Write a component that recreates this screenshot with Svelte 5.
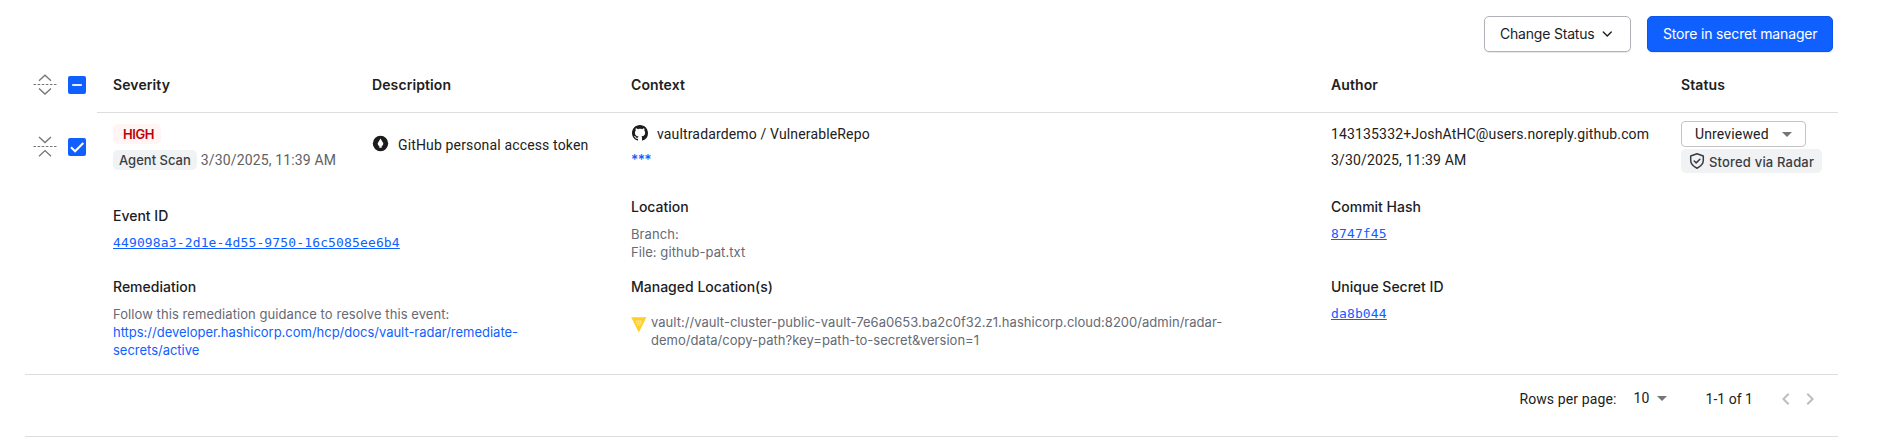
<script>
  const headers = ['Severity', 'Description', 'Context', 'Author', 'Status'];
</script>

{#snippet toggle(open)}
  <svg class="toggle" width="24" height="24" viewBox="0 0 24 24" fill="none" stroke="#757575" stroke-width="1.3">
    {#if open}
      <path d="M6 3l6 5.6L18 3M6 22.2l6-5.6 6 5.6" />
    {:else}
      <path d="M6 8.8l6-5.6 6 5.6M6 16.4l6 5.6 6-5.6" />
    {/if}
    <path d="M.5 12.5h23" stroke-width="1.2" stroke-dasharray="2.6 1.5" />
  </svg>
{/snippet}

<main>
  <div class="actions">
    <button class="btn outline">
      <span>Change Status</span>
      <svg width="16" height="16" viewBox="0 0 16 16" fill="none" stroke="#1c1c1f" stroke-width="1.5" stroke-linecap="round" stroke-linejoin="round"><path d="M3.6 5.8L8 10.3l4.4-4.5" /></svg>
    </button>
    <button class="btn primary"><span>Store in secret manager</span></button>
  </div>

  <section class="head">
    <div class="select">
      {@render toggle(false)}
      <span class="check"><svg width="18" height="18" viewBox="0 0 18 18"><path d="M4.2 9h9.6" stroke="#fff" stroke-width="1.8" /></svg></span>
    </div>
    <div class="cols headcols">
      {#each headers as h}<div>{h}</div>{/each}
    </div>
  </section>

  <section class="row">
    <div class="select">
      {@render toggle(true)}
      <span class="check"><svg width="18" height="18" viewBox="0 0 18 18" fill="none"><path d="M3 9.2l4.1 4.1L15.3 5" stroke="#fff" stroke-width="2" /></svg></span>
    </div>
    <div class="cols">
      <div class="severity">
        <div><span class="badge high">HIGH</span></div>
        <div class="scan"><span class="badge">Agent Scan</span><span class="when">3/30/2025, 11:39 AM</span></div>
      </div>
      <div class="desc">
        <svg width="17" height="17" viewBox="0 0 17 17"><circle cx="8.5" cy="8.5" r="7.7" fill="#1c1c1f" /><path d="M8.5 3.5l2.8 4.7c0 1.5-.7 2.4-1.6 2.9v1.7H7.3v-1.7c-.9-.5-1.6-1.4-1.6-2.9z" fill="#fff" /></svg>
        <span>GitHub personal access token</span>
      </div>
      <div class="context">
        <div class="repo">
          <svg width="16" height="16" viewBox="0 0 16 16"><path fill="#1c1c1f" d="M8 0C3.58 0 0 3.58 0 8c0 3.54 2.29 6.53 5.47 7.59.4.07.55-.17.55-.38 0-.19-.01-.82-.01-1.49-2.01.37-2.53-.49-2.69-.94-.09-.23-.48-.94-.82-1.13-.28-.15-.68-.52-.01-.53.63-.01 1.08.58 1.23.82.72 1.21 1.87.87 2.33.66.07-.52.28-.87.51-1.07-1.78-.2-3.64-.89-3.64-3.95 0-.87.31-1.59.82-2.15-.08-.2-.36-1.02.08-2.12 0 0 .67-.21 2.2.82.64-.18 1.32-.27 2-.27s1.36.09 2 .27c1.53-1.04 2.2-.82 2.2-.82.44 1.1.16 1.92.08 2.12.51.56.82 1.27.82 2.15 0 3.07-1.87 3.75-3.65 3.95.29.25.54.73.54 1.48 0 1.07-.01 1.93-.01 2.2 0 .21.15.46.55.38A8.01 8.01 0 0 0 16 8c0-4.42-3.58-8-8-8z" /></svg>
          <span>vaultradardemo / VulnerableRepo</span>
        </div>
        <a class="stars" href="#secret">***</a>
      </div>
      <div class="author">
        <div>143135332+JoshAtHC@users.noreply.github.com</div>
        <div>3/30/2025, 11:39 AM</div>
      </div>
      <div class="status">
        <div class="picker"><span>Unreviewed</span><i class="caret"></i></div>
        <div class="stored">
          <svg width="16" height="16" viewBox="0 0 16 16" fill="none" stroke="#3b3d45" stroke-width="1.5" stroke-linecap="round" stroke-linejoin="round"><path d="M8 .8L1.7 3v4.6c0 3.7 3.4 6.2 6.3 7.6 2.9-1.4 6.3-3.9 6.3-7.6V3z" /><path d="M5.2 8l2 1.9 3.7-3.7" /></svg>
          <span>Stored via Radar</span>
        </div>
      </div>
    </div>
  </section>

  <section class="details">
    <div class="col">
      <div class="event">
        <h4>Event ID</h4>
        <a class="mono" href="#event">449098a3-2d1e-4d55-9750-16c5085ee6b4</a>
      </div>
      <div>
        <h4>Remediation</h4>
        <p>Follow this remediation guidance to resolve this event:</p>
        <p><a class="guide" href="#guide">https://developer.hashicorp.com/hcp/docs/vault-radar/remediate-<br />secrets/active</a></p>
      </div>
    </div>
    <div class="col">
      <div class="block">
        <h4>Location</h4>
        <p>Branch:</p>
        <p>File: github-pat.txt</p>
      </div>
      <div>
        <h4>Managed Location(s)</h4>
        <div class="managed">
          <svg width="16" height="16" viewBox="0 0 16 16"><path d="M.2.3h15.2L7.8 15.6z" fill="#ffcf25" /><path d="M5 4.1h5.6M5 6.1h5.6M6.2 8.1h3.2" stroke="#fff" stroke-width=".9" stroke-dasharray="1.5 .5" opacity=".85" /></svg>
          <p>vault://vault-cluster-public-vault-7e6a0653.ba2c0f32.z1.hashicorp.cloud:8200/admin/radar-<br />demo/data/copy-path?key=path-to-secret&amp;version=1</p>
        </div>
      </div>
    </div>
    <div class="col">
      <div class="block">
        <h4>Commit Hash</h4>
        <a class="mono" href="#commit">8747f45</a>
      </div>
      <div>
        <h4>Unique Secret ID</h4>
        <a class="mono" href="#unique">da8b044</a>
      </div>
    </div>
  </section>

  <footer>
    <span class="per">Rows per page:</span>
    <span class="num">10</span>
    <i class="caret"></i>
    <span class="range">1-1 of 1</span>
    <svg class="prev" width="24" height="24" viewBox="0 0 24 24" fill="#bdbdbd"><path d="M15.41 7.41L14 6l-6 6 6 6 1.41-1.41L10.83 12z" /></svg>
    <svg width="24" height="24" viewBox="0 0 24 24" fill="#bdbdbd"><path d="M10 6L8.59 7.41 13.17 12l-4.58 4.59L10 18l6-6z" /></svg>
  </footer>
</main>

<style>
  :global(body) { background: #fff; }
  main {
    box-sizing: border-box;
    width: 1838px;
    height: 447px;
    padding: 16px 0 0 25px;
    font: 400 14px/20px Roboto, sans-serif;
    letter-spacing: 0.15px;
    color: #212121;
  }
  a { color: #1060ff; text-decoration: none; }
  .actions { display: flex; justify-content: flex-end; gap: 16px; padding-right: 5px; height: 36px; }
  .btn {
    box-sizing: border-box; height: 36px; border-radius: 5px; padding: 0 15px;
    display: flex; align-items: center; font: 400 14px/20px Inter, sans-serif;
    white-space: nowrap; box-shadow: 0 1px 1px rgba(101, 106, 118, .15);
  }
  .outline { width: 147px; background: #fff; color: #1c1c1f; border: 1px solid #b0b2b7; letter-spacing: -.2px; gap: 6px; }
  .primary { width: 186px; background: #1060ff; color: #fff; border: 1px solid #0c56e9; letter-spacing: -.16px; }
  .head, .row { display: grid; grid-template-columns: 72px 1741px; }
  .head { margin-top: 6px; height: 55px; }
  .row { height: 75px; }
  .select { display: flex; }
  .toggle { margin-left: 8px; }
  .check { width: 18px; height: 18px; margin-left: 11px; border-radius: 2px; background: #1060ff; display: block; }
  .check svg { display: block; }
  .head .toggle { margin-top: 14px; }
  .head .check { margin-top: 18px; }
  .row .toggle { margin-top: 21px; }
  .row .check { margin-top: 25px; }
  .cols { display: grid; grid-template-columns: 259px 259px 700px 350px 173px; }
  .cols > div { padding-left: 16px; white-space: nowrap; }
  .headcols { border-bottom: 1px solid #dedede; align-items: center; font: 600 14px/20px Inter, sans-serif; letter-spacing: .1px; }
  .severity { padding-top: 11px; }
  .severity > div { height: 20px; display: flex; align-items: center; }
  .severity .scan { margin-top: 6px; }
  .badge {
    height: 20px; box-sizing: border-box; padding: 0 6px; border-radius: 5px; background: #f1f2f3; color: #3b3d45;
    font: 500 13px/21px Inter, sans-serif; letter-spacing: 0;
  }
  .high { background: #fff5f5; color: #c00005; width: 48px; padding-left: 10px; font-weight: 600; letter-spacing: -.4px; }
  .when { margin-left: 4px; color: #616161; }
  .desc { display: flex; padding-top: 21px; }
  .desc svg { margin-top: 1px; }
  .desc span { margin-left: 9px; padding-top: 1px; }
  .context { padding-top: 11px; }
  .repo { display: flex; height: 20px; }
  .repo svg { margin: 1px 0 0 1px; }
  .repo span { margin-left: 9px; }
  .stars { display: block; margin-top: 6px; font: 500 14px/20px Inter, sans-serif; letter-spacing: -.6px; }
  .author { padding-top: 11px; }
  .author div + div { margin-top: 6px; }
  .status { padding-top: 8px; }
  .picker {
    box-sizing: border-box; width: 125px; height: 26px; border: 1px solid #c4c4c4; border-radius: 4px;
    padding: 0 13px; display: flex; justify-content: space-between; align-items: center;
  }
  .caret { width: 0; height: 0; border: 5px solid transparent; border-top-color: #757575; border-bottom: 0; }
  .stored {
    box-sizing: border-box; width: 141px; height: 24px; margin-top: 2px; padding-left: 8px; border-radius: 5px; background: #f1f2f3;
    color: #3b3d45; display: flex; align-items: center; gap: 4px; font: 500 13px/24px Inter, sans-serif; letter-spacing: .18px;
  }
  .stored span { padding-top: 1px; }
  .details { display: grid; grid-template-columns: 518px 700px 437px; padding-left: 88px; box-sizing: border-box; height: 187px; border-bottom: 1px solid #dedede; }
  .block { padding-top: 9px; height: 89px; box-sizing: border-box; }
  .event { padding-top: 18px; height: 89px; box-sizing: border-box; }
  h4 { margin: 0; font: 500 14px/20px Inter, sans-serif; letter-spacing: 0; height: 20px; color: #1c1c1f; }
  p { margin: 0; font: 400 13px/18px Inter, sans-serif; letter-spacing: .07px; color: #656a76; }
  h4 + p { margin-top: 8px; }
  .guide { letter-spacing: -.015px; }
  .mono {
    display: block; width: max-content; margin-top: 8px; font: 400 13px/18px "DejaVu Sans Mono", monospace; letter-spacing: .14px;
    text-decoration: underline; text-underline-offset: 1px; text-decoration-thickness: 1px; text-decoration-skip-ink: none;
  }
  .managed { display: flex; margin-top: 16px; }
  .managed svg { margin-top: 4px; }
  .managed p { margin-left: 4px; letter-spacing: .03px; }
  footer {
    box-sizing: border-box; height: 62px; display: flex; align-items: center; justify-content: flex-end;
    border-bottom: 1px solid #dedede; padding: 0 16px 14px 0;
  }
  .per { letter-spacing: .11px; }
  .num { margin: 0 8px 1px 17px; }
  .range { margin-left: 38px; letter-spacing: .03px; }
  .prev { margin-left: 21px; }
</style>
